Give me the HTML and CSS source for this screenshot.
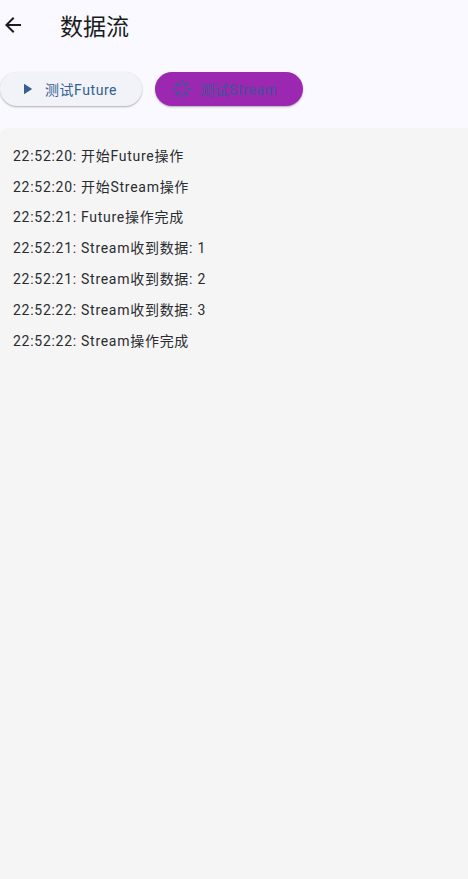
FILE: index.html
```html
<!DOCTYPE html>
<html>
	<head>
		<meta charset="UTF-8">
		<title>数据流</title>
		<link rel="stylesheet" href="styles.css">
	</head>

	<body>
		<div class="appBar">
			<svg class="back" width="24" height="24" viewBox="0 0 24 24">
				<path d="M20 11H7.83l5.59-5.59L12 4l-8 8 8 8 1.41-1.41L7.83 13H20v-2z"/>
			</svg>
			<h1 class="title">数据流</h1>
		</div>

		<div class="actions">
			<div class="btn btnFuture">
				<svg class="btnIcon" width="18" height="18" viewBox="0 0 18 18">
					<path d="M5 3.8v10.4l8.2-5.2z"/>
				</svg>
				<span>测试Future</span>
			</div>
			<div class="btn btnStream">
				<svg class="btnIcon" width="20" height="20" viewBox="0 0 20 20">
					<g class="spin">
						<path d="M10 2.2v1.2"/>
						<path d="M15.3 4.7l-2.2 2.2"/>
						<path d="M18 10h-1.2"/>
						<path d="M15.3 15.3l-2.2-2.2"/>
						<path d="M10 17.8v-1.2"/>
						<path d="M4.7 15.3l2.2-2.2"/>
						<path d="M2 10h1.2"/>
						<path d="M4.7 4.7l2.2 2.2"/>
					</g>
				</svg>
				<span>测试Stream</span>
			</div>
		</div>

		<ul class="logList">
			<li>22:52:20: 开始Future操作</li>
			<li>22:52:20: 开始Stream操作</li>
			<li>22:52:21: Future操作完成</li>
			<li>22:52:21: Stream收到数据: 1</li>
			<li>22:52:21: Stream收到数据: 2</li>
			<li>22:52:22: Stream收到数据: 3</li>
			<li>22:52:22: Stream操作完成</li>
		</ul>
	</body>
</html>
```

FILE: styles.css
```css
*{
	margin: 0;
	padding: 0;
	box-sizing: border-box;
}
ul,li{
	list-style: none;
}

html,body{
	height: 100%;
	overflow: hidden;
}

body{
	display: flex;
	flex-direction: column;
	background-color: #f9f9ff;
	font-family: Roboto, "Noto Sans CJK SC", sans-serif;
	color: #2a2c30;
}

.appBar{
	display: flex;
	align-items: center;
	height: 50px;
	flex-shrink: 0;
}
.back{
	margin-left: 1px;
	fill: #1a1c20;
}
.title{
	margin-left: 35px;
	font-size: 23px;
	font-weight: 400;
	color: #1a1c20;
}

.actions{
	display: flex;
	gap: 13px;
	padding-top: 22px;
	flex-shrink: 0;
}

.btn{
	display: flex;
	align-items: center;
	height: 34px;
	border-radius: 17px;
	font-size: 14px;
	letter-spacing: .55px;
	box-shadow: 0 1px 2px rgba(0,0,0,.3);
}
.btnFuture{
	width: 142px;
	padding-left: 19px;
	background-color: #f1f3f9;
	color: #33608f;
}
.btnFuture .btnIcon{
	fill: #33608f;
}
.btnFuture span{
	margin-left: 8px;
}
.btnStream{
	width: 148px;
	padding-left: 17px;
	background-color: #9c27b0;
	color: #3f5596;
}
.btnStream .btnIcon{
	stroke: #33608f;
	stroke-width: 2.2;
	stroke-linecap: round;
	fill: none;
}
.btnStream span{
	margin-left: 8px;
}

.logList{
	flex: 1;
	margin-top: 22px;
	padding: 12.8px 13px;
	background-color: #f5f5f5;
	border-radius: 8px 0 0 0;
	font-size: 14px;
	letter-spacing: .72px;
}
.logList li{
	height: 30.8px;
	line-height: 30.8px;
}
```
